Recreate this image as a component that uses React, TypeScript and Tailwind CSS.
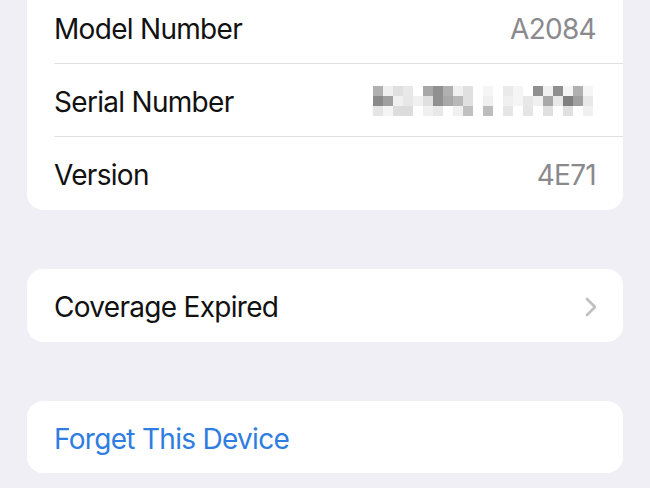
const pixels: string[][] = [
  [
    "bg-[#b0b0b0]", "bg-[#f0f0f0]", "bg-[#e0e0e0]", "bg-[#e8e8e8]", "bg-[#ffffff]", "bg-[#a8a8a8]",
    "bg-[#909090]", "bg-[#b0b0b0]", "bg-[#f0f0f0]", "bg-[#e0e0e0]", "bg-[#ffffff]", "bg-[#f5f5f5]",
    "bg-[#ffffff]", "bg-[#eaeaea]", "bg-[#f5f5f5]", "bg-[#ffffff]", "bg-[#909090]", "bg-[#f0f0f0]",
    "bg-[#8f8f8f]", "bg-[#f5f5f5]", "bg-[#b0b0b0]", "bg-[#f5f5f5]",
  ],
  [
    "bg-[#8a8a8a]", "bg-[#a0a0a0]", "bg-[#f0f0f0]", "bg-[#e8e8e8]", "bg-[#f0f0f0]", "bg-[#e0e0e0]",
    "bg-[#909090]", "bg-[#a8a8a8]", "bg-[#b8b8b8]", "bg-[#e0e0e0]", "bg-[#ffffff]", "bg-[#f0f0f0]",
    "bg-[#ffffff]", "bg-[#f0f0f0]", "bg-[#f5f5f5]", "bg-[#e8e8e8]", "bg-[#f0f0f0]", "bg-[#a8a8a8]",
    "bg-[#e8e8e8]", "bg-[#7f7f7f]", "bg-[#a0a0a0]", "bg-[#e8e8e8]",
  ],
  [
    "bg-[#e5e5e5]", "bg-[#f5f5f5]", "bg-[#dcdcdc]", "bg-[#dcdcdc]", "bg-[#ffffff]", "bg-[#f0f0f0]",
    "bg-[#e8e8e8]", "bg-[#ffffff]", "bg-[#f0f0f0]", "bg-[#c0c0c0]", "bg-[#ffffff]", "bg-[#bdbdbd]",
    "bg-[#ffffff]", "bg-[#e5e5e5]", "bg-[#ffffff]", "bg-[#e5e5e5]", "bg-[#ffffff]", "bg-[#e0e0e0]",
    "bg-[#ffffff]", "bg-[#e0e0e0]", "bg-[#ffffff]", "bg-[#f0f0f0]",
  ],
];

// blurred-out serial number
const Pixelated = () => (
  <div className="flex flex-col">
    {pixels.map((row, r) => (
      <div key={r} className="flex">
        {row.map((c, i) => (
          <div key={i} className={`w-[10px] h-[10px] ${c}`} />
        ))}
      </div>
    ))}
  </div>
);

const Chevron = () => (
  <svg width="14" height="22" viewBox="0 0 14 22" fill="none">
    <path d="M3 3l8 8-8 8" stroke="#bfbfc3" strokeWidth="2.6" strokeLinecap="round" strokeLinejoin="round" />
  </svg>
);

type RowProps = {
  label: string;
  children?: React.ReactNode;
  divider?: boolean;
};

const Row = ({ label, children, divider }: RowProps) => (
  <div className="pl-[27px]">
    <div className={`h-[73px] flex items-center justify-between pr-[27px] ${divider ? "border-b border-[#e1e1e5]" : ""}`}>
      <span className="text-[#111111] pt-[3px]">{label}</span>
      {children}
    </div>
  </div>
);

export default function App() {
  return (
    <div
      className="w-[650px] h-[488px] overflow-hidden bg-[#f0eff5] px-[27px] text-[28px] tracking-[-0.7px]"
      style={{ fontFamily: "Inter, 'Liberation Sans', sans-serif" }}
    >
      <div className="-mt-[9px] bg-white rounded-b-[16px]">
        <Row label="Model Number" divider>
          <span className="text-[#8a8a8e] pt-[3px]">A2084</span>
        </Row>
        <Row label="Serial Number" divider>
          <div className="pr-[3px] pt-[2px]">
            <Pixelated />
          </div>
        </Row>
        <Row label="Version">
          <span className="text-[#8a8a8e] pt-[3px]">4E71</span>
        </Row>
      </div>

      <div className="mt-[59px] bg-white rounded-[16px]">
        <Row label="Coverage Expired">
          <div className="-mr-[2px] pt-[2px]">
            <Chevron />
          </div>
        </Row>
      </div>

      <div className="mt-[59px] bg-white rounded-[16px]">
        <div className="h-[72px] flex items-center pl-[27px]">
          <span className="text-[#2f7de1] pt-[3px]">Forget This Device</span>
        </div>
      </div>
    </div>
  );
}
